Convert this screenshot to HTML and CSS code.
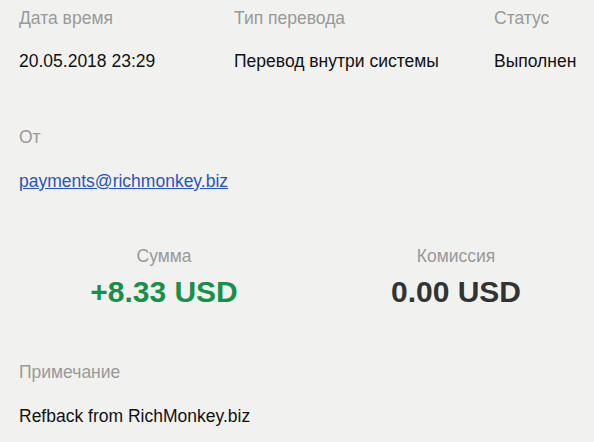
FILE: index.html
```html
<!DOCTYPE html>
<html lang="ru">
<head>
    <meta charset="UTF-8">
    <meta name="viewport" content="width=device-width, initial-scale=1.0">
    <title>Перевод</title>
    <link rel="stylesheet" href="styles.css">
</head>
<body>
    <div class="details">
        <div class="row">
            <div class="field">
                <div class="label">Дата время</div>
                <div class="value">20.05.2018 23:29</div>
            </div>
            <div class="field">
                <div class="label">Тип перевода</div>
                <div class="value">Перевод внутри системы</div>
            </div>
            <div class="field">
                <div class="label">Статус</div>
                <div class="value">Выполнен</div>
            </div>
        </div>

        <div class="section">
            <div class="label">От</div>
            <div class="value"><a href="#">payments@richmonkey.biz</a></div>
        </div>

        <div class="amounts">
            <div class="amount">
                <div class="label">Сумма</div>
                <div class="sum plus">+8.33 USD</div>
            </div>
            <div class="amount">
                <div class="label">Комиссия</div>
                <div class="sum">0.00 USD</div>
            </div>
        </div>

        <div class="section note">
            <div class="label">Примечание</div>
            <div class="value">Refback from RichMonkey.biz</div>
        </div>
    </div>
</body>
</html>
```

FILE: styles.css
```css
body {
    margin: 0;
    font-family: "Liberation Sans", Arial, sans-serif;
    background-color: #f1f2f0;
    overflow: hidden;
}
.details {
    padding: 6px 0 0 19px;
}
.row {
    display: grid;
    grid-template-columns: 215px 260px auto;
}
.label {
    font-size: 17.5px;
    line-height: 24px;
    color: #999999;
}
.value {
    font-size: 17.5px;
    line-height: 24px;
    color: #111111;
    margin-top: 19px;
}
.value a {
    color: #2a52be;
}
.section {
    margin-top: 52px;
}
.section .value {
    margin-top: 20px;
}
.amounts {
    display: grid;
    grid-template-columns: 292px 292px;
    margin-top: 51px;
    margin-left: -1px;
}
.amount {
    text-align: center;
}
.sum {
    font-size: 30px;
    font-weight: bold;
    line-height: 34px;
    margin-top: 7px;
    color: #333333;
}
.sum.plus {
    color: #1a8f48;
}
.section.note {
    margin-top: 51px;
}
.section.note .value {
    margin-top: 20px;
}
```
